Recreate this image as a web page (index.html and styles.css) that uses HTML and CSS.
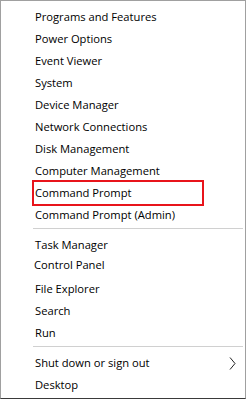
FILE: index.html
```html
<!DOCTYPE html>
<html>
<head>
<meta charset="utf-8">
<link rel="stylesheet" href="styles.css">
</head>
<body>
<div class="menu">
  <ul class="group">
    <li class="item">Programs and Features</li>
    <li class="item">Power Options</li>
    <li class="item">Event Viewer</li>
    <li class="item">System</li>
    <li class="item">Device Manager</li>
    <li class="item">Network Connections</li>
    <li class="item">Disk Management</li>
    <li class="item">Computer Management</li>
    <li class="item highlighted">Command Prompt</li>
    <li class="item">Command Prompt (Admin)</li>
  </ul>
  <div class="sep"></div>
  <ul class="group">
    <li class="item">Task Manager</li>
    <li class="item shifted">Control Panel</li>
    <li class="item">File Explorer</li>
    <li class="item">Search</li>
    <li class="item">Run</li>
  </ul>
  <div class="sep"></div>
  <ul class="group">
    <li class="item has-sub">Shut down or sign out
      <svg class="chev" width="7" height="13" viewBox="0 0 7 13"><path d="M1 0.5 L6 6.5 L1 12.5" fill="none" stroke="#222" stroke-width="1"/></svg>
    </li>
    <li class="item">Desktop</li>
  </ul>
</div>
</body>
</html>
```

FILE: styles.css
```css
html, body {
  margin: 0;
  padding: 0;
  background: #ffffff;
}
.menu {
  box-sizing: border-box;
  width: 246px;
  height: 399px;
  border-top: 1px solid #a0a0a0;
  border-left: 1px solid #a0a0a0;
  border-right: 1px solid #a0a0a0;
  border-bottom: 1px solid #3a3a3a;
  box-shadow: 0 1px 0 #a8a8a8;
  padding-top: 5px;
  background: #ffffff;
  font-family: "Open Sans", "Noto Sans", sans-serif;
  font-size: 11.2px;
  color: #000000;
}
.group {
  list-style: none;
  margin: 0;
  padding: 0;
}
.item {
  position: relative;
  display: flex;
  align-items: center;
  height: 22px;
  line-height: 22px;
  padding-left: 34px;
  padding-right: 9px;
  white-space: nowrap;
}
.shifted {
  padding-left: 33px;
  top: -2px;
}
.highlighted::after {
  content: "";
  position: absolute;
  left: 31px;
  top: -2px;
  width: 168px;
  height: 22px;
  border: 2px solid #e8141b;
}
.has-sub {
  justify-content: space-between;
}
.chev {
  display: block;
}
.sep {
  height: 1px;
  background: #d0d0d0;
  margin: 2px 2px 5px 32px;
}
```
